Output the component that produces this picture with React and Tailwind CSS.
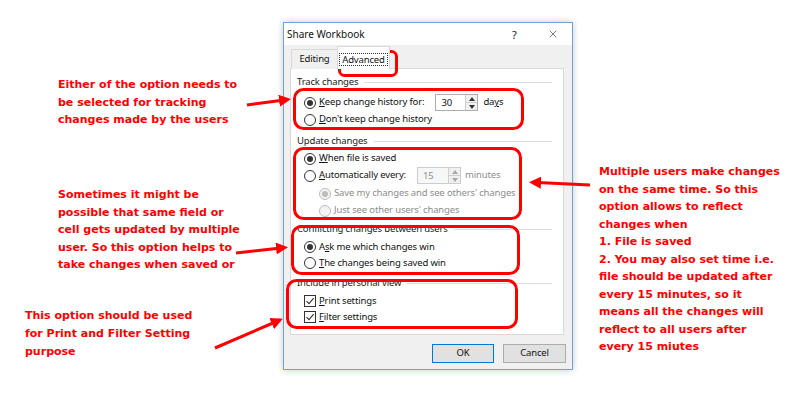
import { X } from 'lucide-react';

const dlgFont = { fontFamily: '"Noto Sans", "Liberation Sans", sans-serif' };
const noteFont = { fontFamily: '"DejaVu Sans", "Liberation Sans", sans-serif' };

function Radio({ checked = false, disabled = false }) {
    return (
        <span
            className={
                disabled
                    ? 'w-[12px] h-[12px] rounded-full border border-[#bcbcbc] bg-[#f4f4f4] flex items-center justify-center shrink-0'
                    : 'w-[12px] h-[12px] rounded-full border border-[#333333] bg-white flex items-center justify-center shrink-0'
            }
        >
            {checked && (
                <span className={disabled ? 'w-[6px] h-[6px] rounded-full bg-[#bcbcbc]' : 'w-[6px] h-[6px] rounded-full bg-[#333333]'} />
            )}
        </span>
    );
}

function Check() {
    return (
        <span className="w-[12px] h-[12px] border border-[#333333] bg-white flex items-center justify-center shrink-0">
            <svg width="10" height="10" viewBox="0 0 10 10">
                <path d="M1.5 5.2 L4 7.6 L8.6 2.2" fill="none" stroke="#333" strokeWidth="1.1" />
            </svg>
        </span>
    );
}

function Spin({ value, disabled = false, width }) {
    return (
        <div
            className={
                disabled
                    ? 'flex h-[17px] border border-[#cccccc] bg-[#f7f7f7] text-[#8d8d8d]'
                    : 'flex h-[17px] border border-[#abadb3] bg-white text-[#111]'
            }
            style={{ width }}
        >
            <span className="flex-1 pl-[5px] leading-[15px]">{value}</span>
            <div className="w-[12px] flex flex-col border-l border-[#cfcfcf]">
                <span className="flex-1 flex items-center justify-center border-b border-[#cfcfcf] bg-[#f0f0f0]">
                    <svg width="6" height="4" viewBox="0 0 6 4">
                        <path d="M0 4 L3 0 L6 4 Z" fill={disabled ? '#a8a8a8' : '#333'} />
                    </svg>
                </span>
                <span className="flex-1 flex items-center justify-center bg-[#f0f0f0]">
                    <svg width="6" height="4" viewBox="0 0 6 4">
                        <path d="M0 0 L3 4 L6 0 Z" fill={disabled ? '#a8a8a8' : '#333'} />
                    </svg>
                </span>
            </div>
        </div>
    );
}

function Heading({ children, className = '' }) {
    return (
        <div className={`flex items-center h-[14px] pr-[5px] ${className}`}>
            <span className="text-[#1a1a1a]">{children}</span>
            <span className="flex-1 h-px bg-[#dcdcdc] ml-[6px]" />
        </div>
    );
}

function Row({ children, className = '' }) {
    return <div className={`flex items-center gap-[3px] pl-[7px] ${className}`}>{children}</div>;
}

function Note({ lines, className }) {
    return (
        <div className={`absolute text-[11px] font-bold text-[#ff0000] leading-[17.5px] whitespace-nowrap ${className}`} style={noteFont}>
            {lines.map((l, i) => (
                <div key={i}>{l}</div>
            ))}
        </div>
    );
}

export default function App() {
    return (
        <div className="relative w-[808px] h-[403px] bg-white overflow-hidden">
            {/* Dialog */}
            <div className="pt-[22px] pl-[283px]">
                <div
                    className="w-[290px] h-[348px] border border-[#6fa3d8] bg-[#f0f0f0] flex flex-col text-[9.5px] tracking-[-0.15px] text-[#111] shadow-[0_0_7px_rgba(0,0,0,0.22)]"
                    style={dlgFont}
                >
                    {/* Title bar */}
                    <div className="h-[22px] bg-white flex items-center pl-[3px] relative">
                        <span className="text-[10px] tracking-normal text-[#111]">Share Workbook</span>
                        <span className="absolute left-[228px] top-[4px] text-[11px] text-[#222]">?</span>
                        <X className="absolute left-[263px] top-[5px]" size={12} strokeWidth={1.2} color="#222" />
                    </div>

                    <div className="flex-1 flex flex-col px-[6px] pt-[2px]">
                        {/* Tabs */}
                        <div className="flex items-end h-[22px] relative z-10">
                            <div className="h-[20px] w-[47px] border border-[#d9d9d9] border-b-0 bg-[#f0f0f0] flex items-center justify-center ml-[1px]">
                                Editing
                            </div>
                            <div className="h-[23px] w-[53px] -ml-[1px] border border-[#d9d9d9] border-b-0 bg-white flex items-center justify-center">
                                <span className="border border-dotted border-[#333] px-[2px] leading-[11px] mt-[3px]">Advanced</span>
                            </div>
                        </div>

                        {/* Panel */}
                        <div className="h-[267px] w-[274px] -mt-px border border-[#d9d9d9] bg-white px-[6px]">
                            <Heading className="mt-[6px]">Track changes</Heading>
                            <Row className="mt-[5px] h-[17px]">
                                <Radio checked />
                                <span><u>K</u>eep change history for:</span>
                                <span className="ml-[8px]">
                                    <Spin value="30" width={43} />
                                </span>
                                <span className="ml-[2px]">da<u>y</u>s</span>
                            </Row>
                            <Row className="h-[17px]">
                                <Radio />
                                <span><u>D</u>on't keep change history</span>
                            </Row>

                            <Heading className="mt-[6px]">Update changes</Heading>
                            <Row className="mt-[2px] h-[17px]">
                                <Radio checked />
                                <span><u>W</u>hen file is saved</span>
                            </Row>
                            <Row className="h-[17px]">
                                <Radio />
                                <span><u>A</u>utomatically every:</span>
                                <span className="ml-[8px]">
                                    <Spin value="15" width={44} disabled />
                                </span>
                                <span className="ml-[1px] text-[#8d8d8d]">minutes</span>
                            </Row>
                            <Row className="mt-[1px] h-[17px] pl-[22px] text-[#8d8d8d]">
                                <Radio checked disabled />
                                <span>Save my changes and see others' changes</span>
                            </Row>
                            <Row className="h-[17px] pl-[22px] text-[#8d8d8d]">
                                <Radio disabled />
                                <span>Just see other users' changes</span>
                            </Row>

                            <Heading className="mt-[3px]">Conflicting changes between users</Heading>
                            <Row className="mt-[3px] h-[16px]">
                                <Radio checked />
                                <span>A<u>s</u>k me which changes win</span>
                            </Row>
                            <Row className="h-[16px]">
                                <Radio />
                                <span><u>T</u>he changes being saved win</span>
                            </Row>

                            <Heading className="mt-[5px]">Include in personal view</Heading>
                            <Row className="mt-[3px] h-[16px]">
                                <Check />
                                <span><u>P</u>rint settings</span>
                            </Row>
                            <Row className="h-[16px]">
                                <Check />
                                <span><u>F</u>ilter settings</span>
                            </Row>
                        </div>

                        {/* Buttons */}
                        <div className="flex justify-end gap-[9px] mt-[9px]">
                            <button className="w-[62px] h-[19px] border border-[#0078d7] bg-[#e1e1e1] text-[9.5px]">OK</button>
                            <button className="w-[63px] h-[19px] border border-[#adadad] bg-[#e1e1e1] text-[9.5px]">Cancel</button>
                        </div>
                    </div>
                </div>
            </div>

            {/* Annotations */}
            <Note
                className="left-[58px] top-[76px]"
                lines={['Either of the option needs to', 'be selected for tracking', 'changes made by the users']}
            />
            <Note
                className="left-[58px] top-[186px]"
                lines={[
                    'Sometimes it might be',
                    'possible that same field or',
                    'cell gets updated by multiple',
                    'user. So this option helps to',
                    'take changes when saved or',
                ]}
            />
            <Note
                className="left-[25px] top-[307px] leading-[18px]"
                lines={['This option should be used', 'for Print and Filter Setting', 'purpose']}
            />
            <Note
                className="left-[599px] top-[163px] leading-[17.4px]"
                lines={[
                    'Multiple users make changes',
                    'on the same time. So this',
                    'option allows to reflect',
                    'changes when',
                    '1. File is saved',
                    '2. You may also set time i.e.',
                    'file should be updated after',
                    'every 15 minutes, so it',
                    'means all the changes will',
                    'reflect to all users after',
                    'every 15 miutes',
                ]}
            />

            {/* Red markup: boxes and arrows */}
            <svg className="absolute inset-0 pointer-events-none" width="808" height="403" viewBox="0 0 808 403">
                <defs>
                    <marker id="ah" markerWidth="4" markerHeight="4" refX="3" refY="2" orient="auto" markerUnits="strokeWidth">
                        <path d="M0 0 L4 2 L0 4 Z" fill="#ff0000" />
                    </marker>
                </defs>
                <g fill="none" stroke="#ff0000" strokeWidth="3">
                    <rect x="339.5" y="51.5" width="57" height="24" rx="5" />
                    <rect x="294.5" y="89.5" width="228" height="39" rx="9" />
                    <rect x="294.5" y="148.5" width="226" height="70" rx="9" />
                    <rect x="292.5" y="226.5" width="226" height="47" rx="9" />
                    <rect x="287.5" y="280.5" width="229" height="47" rx="9" />
                    <line x1="247" y1="105" x2="288" y2="99.5" markerEnd="url(#ah)" />
                    <line x1="590" y1="185" x2="532" y2="182.3" markerEnd="url(#ah)" />
                    <line x1="236" y1="253" x2="285" y2="247.5" markerEnd="url(#ah)" />
                    <line x1="215" y1="348" x2="280" y2="320" markerEnd="url(#ah)" />
                </g>
            </svg>
        </div>
    );
}
